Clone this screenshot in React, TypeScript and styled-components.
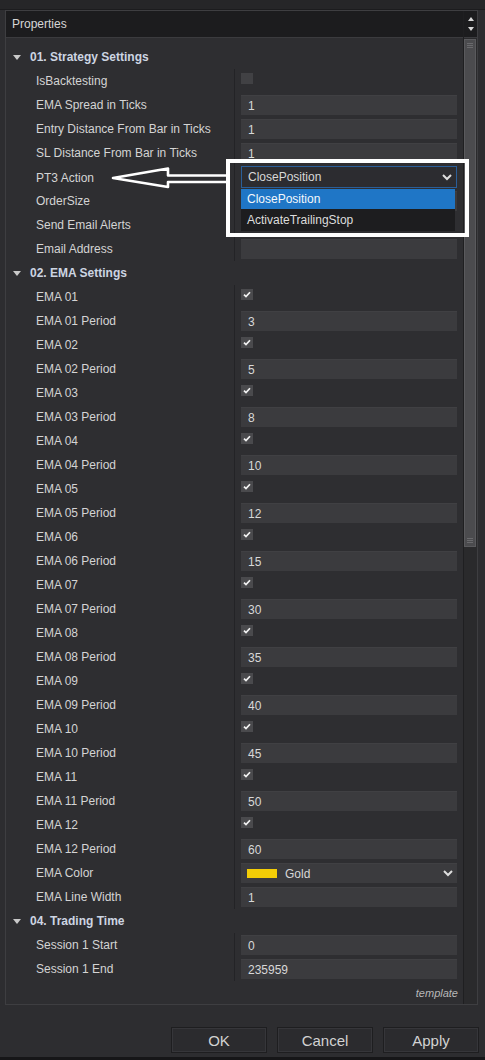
import React from "react";
import styled, { createGlobalStyle } from "styled-components";

const GlobalStyle = createGlobalStyle`
  html, body { margin: 0; padding: 0; background: #2d2d30; }
  body { font-family: "Liberation Sans", Arial, sans-serif; }
  * { box-sizing: border-box; }
`;

const Window = styled.div`
  position: relative;
  width: 485px;
  height: 1060px;
  display: flex;
  flex-direction: column;
  background: #2d2d30;
  overflow: hidden;
`;

const TopBar = styled.div`
  height: 10px;
  background: #262628;
  border-bottom: 1px solid #1c1c1e;
`;

const Panel = styled.div`
  margin-left: 5px;
  width: 473px;
  height: 995px;
  border: 1px solid #3e3e41;
  display: flex;
  background: #2e2e31;
`;

const Content = styled.div`
  flex: 1;
  min-width: 0;
  display: flex;
  flex-direction: column;
`;

const Header = styled.div`
  height: 27px;
  border-bottom: 1px solid #3b3b3e;
  background: #1c1c1e;
  color: #d6d6d6;
  font-size: 12px;
  display: flex;
  align-items: center;
  padding-left: 6px;
`;

const Grid = styled.div`
  padding-top: 7px;
  display: flex;
  flex-direction: column;
`;

const GroupRow = styled.div`
  height: 24px;
  display: flex;
  align-items: center;
  padding-left: 7px;
  gap: 9px;
  font-size: 12px;
  font-weight: bold;
  color: #cdd5e2;
`;

const Caret = styled.span`
  width: 0;
  height: 0;
  border-left: 4px solid transparent;
  border-right: 4px solid transparent;
  border-top: 5px solid #c9c9c9;
`;

const PropRow = styled.div`
  display: grid;
  grid-template-columns: 228px 1fr;
  height: 24px;
`;

const Label = styled.div`
  padding-left: 30px;
  display: flex;
  align-items: center;
  color: #d4d4d4;
  font-size: 12px;
  white-space: nowrap;
`;

const ValueCell = styled.div`
  position: relative;
  border-left: 1px solid #232326;
  padding: 2px 6px;
`;

const Input = styled.div`
  height: 20px;
  background: #3b3b3e;
  border-top: 1px solid #404043;
  display: flex;
  align-items: center;
  padding-left: 7px;
  color: #d8d8d8;
  font-size: 12px;
  gap: 8px;
`;

const SelectBox = styled.div`
  height: 22px;
  margin-top: -1px;
  background: #2c2c30;
  border: 1px solid #2a5e99;
  display: flex;
  align-items: center;
  padding-left: 6px;
  color: #d8d8d8;
  font-size: 12px;
`;

const Chevron = styled.svg`
  margin-left: auto;
  margin-right: 4px;
`;

const DropList = styled.div`
  position: absolute;
  top: 24px;
  left: 6px;
  right: 8px;
  background: #1d1d1f;
  z-index: 2;
`;

const DropItem = styled.div<{ $active?: boolean }>`
  height: ${(p) => (p.$active ? 20 : 22)}px;
  display: flex;
  align-items: center;
  padding-left: 6px;
  font-size: 12px;
  color: ${(p) => (p.$active ? "#f4f8fc" : "#dcdcdc")};
  background: ${(p) => (p.$active ? "#1f76c6" : "#1d1d1f")};
`;

const CheckBox = styled.div<{ $checked?: boolean }>`
  width: 12px;
  height: 11px;
  margin-top: 2px;
  background: ${(p) => (p.$checked ? "#4a4a4d" : "#414144")};
  display: flex;
  align-items: center;
  justify-content: center;
`;

const Swatch = styled.span`
  width: 30px;
  height: 9px;
  background: #f3cd06;
  margin-left: -1px;
`;

const Footer = styled.div`
  height: 23px;
  display: flex;
  justify-content: flex-end;
  align-items: center;
  padding-right: 5px;
  font-style: italic;
  font-size: 11px;
  color: #b8b8b8;
`;

const Scrollbar = styled.div`
  width: 14px;
  display: flex;
  flex-direction: column;
  border-left: 1px solid #1f1f21;
`;

const ScrollButtons = styled.div`
  height: 27px;
  background: #1c1c1e;
  border-bottom: 1px solid #3b3b3e;
  display: flex;
  flex-direction: column;
  align-items: center;
  justify-content: space-around;
  padding: 3px 0;
`;

const Tri = styled.span<{ $up?: boolean }>`
  width: 0;
  height: 0;
  border-left: 3px solid transparent;
  border-right: 3px solid transparent;
  ${(p) =>
    p.$up ? "border-bottom: 4px solid #d8d8d8;" : "border-top: 4px solid #d8d8d8;"}
`;

const Track = styled.div`
  flex: 1;
  background: #2a2a2c;
  padding: 1px 1px 0 0;
`;

const Thumb = styled.div`
  height: 508px;
  background: #4b4b4e;
  border: 1px solid #5a5a5d;
  display: flex;
  flex-direction: column;
  align-items: center;
  justify-content: space-between;
  padding: 3px 0;
`;

const Grip = styled.div`
  width: 6px;
  height: 5px;
  border-top: 1px solid #6a6a6d;
  border-bottom: 1px solid #6a6a6d;
  position: relative;
  &::after {
    content: "";
    position: absolute;
    left: 0;
    right: 0;
    top: 1px;
    border-top: 1px solid #6a6a6d;
  }
`;

const ButtonBar = styled.div`
  display: flex;
  justify-content: flex-end;
  gap: 10px;
  padding: 22px 6px 0 0;
`;

const Button = styled.button`
  width: 96px;
  height: 26px;
  font-family: "Liberation Sans", Arial, sans-serif;
  font-size: 15px;
  color: #d2d2d2;
  background: #2b2b2e;
  border: 1px solid #1e1e20;
  box-shadow: inset 0 0 0 1px #36363a;
  padding: 0;
`;

const BottomStrip = styled.div`
  margin-top: auto;
  height: 3px;
  background: #161618;
`;

const Highlight = styled.div`
  position: absolute;
  left: 226px;
  top: 159px;
  width: 243px;
  height: 78px;
  border: 4px solid #ffffff;
  z-index: 3;
`;

const ArrowSvg = styled.svg`
  position: absolute;
  left: 106px;
  top: 163px;
  z-index: 3;
`;

type Prop =
  | { kind: "group"; title: string }
  | { kind: "input"; label: string; value: string }
  | { kind: "check"; label: string; checked: boolean }
  | { kind: "select"; label: string; value: string; options: string[] }
  | { kind: "color"; label: string; value: string };

const emaRows: Prop[] = [3, 5, 8, 10, 12, 15, 30, 35, 40, 45, 50, 60].flatMap((p, i) => {
  const n = String(i + 1).padStart(2, "0");
  return [
    { kind: "check", label: `EMA ${n}`, checked: true } as Prop,
    { kind: "input", label: `EMA ${n} Period`, value: String(p) } as Prop,
  ];
});

const props: Prop[] = [
  { kind: "group", title: "01. Strategy Settings" },
  { kind: "check", label: "IsBacktesting", checked: false },
  { kind: "input", label: "EMA Spread in Ticks", value: "1" },
  { kind: "input", label: "Entry Distance From Bar in Ticks", value: "1" },
  { kind: "input", label: "SL Distance From Bar in Ticks", value: "1" },
  { kind: "select", label: "PT3 Action", value: "ClosePosition", options: ["ClosePosition", "ActivateTrailingStop"] },
  { kind: "input", label: "OrderSize", value: "" },
  { kind: "check", label: "Send Email Alerts", checked: false },
  { kind: "input", label: "Email Address", value: "" },
  { kind: "group", title: "02. EMA Settings" },
  ...emaRows,
  { kind: "color", label: "EMA Color", value: "Gold" },
  { kind: "input", label: "EMA Line Width", value: "1" },
  { kind: "group", title: "04. Trading Time" },
  { kind: "input", label: "Session 1 Start", value: "0" },
  { kind: "input", label: "Session 1 End", value: "235959" },
];

const ChevronIcon = () => (
  <Chevron width="10" height="7" viewBox="0 0 10 7">
    <polyline points="1,1 5,5 9,1" fill="none" stroke="#dedede" strokeWidth="2" />
  </Chevron>
);

const CheckMark = () => (
  <svg width="8" height="7" viewBox="0 0 8 7">
    <polyline points="1,3.6 3,5.6 7,1.2" fill="none" stroke="#f2f2f2" strokeWidth="1.7" />
  </svg>
);

function renderValue(p: Prop) {
  switch (p.kind) {
    case "input":
      return <Input>{p.value}</Input>;
    case "check":
      return <CheckBox $checked={p.checked}>{p.checked && <CheckMark />}</CheckBox>;
    case "select":
      return (
        <>
          <SelectBox>
            {p.value}
            <ChevronIcon />
          </SelectBox>
          <DropList>
            {p.options.map((o, i) => (
              <DropItem key={o} $active={i === 0}>
                {o}
              </DropItem>
            ))}
          </DropList>
        </>
      );
    case "color":
      return (
        <Input>
          <Swatch />
          {p.value}
          <ChevronIcon />
        </Input>
      );
    default:
      return null;
  }
}

export default function App() {
  return (
    <>
      <GlobalStyle />
      <Window>
        <TopBar />
        <Panel>
          <Content>
            <Header>Properties</Header>
            <Grid>
              {props.map((p, i) =>
                p.kind === "group" ? (
                  <GroupRow key={i}>
                    <Caret />
                    {p.title}
                  </GroupRow>
                ) : (
                  <PropRow key={i}>
                    <Label>{p.label}</Label>
                    <ValueCell>{renderValue(p)}</ValueCell>
                  </PropRow>
                )
              )}
            </Grid>
            <Footer>template</Footer>
          </Content>
          <Scrollbar>
            <ScrollButtons>
              <Tri $up />
              <Tri />
            </ScrollButtons>
            <Track>
              <Thumb>
                <Grip />
                <Grip />
              </Thumb>
            </Track>
          </Scrollbar>
        </Panel>
        <ButtonBar>
          <Button>OK</Button>
          <Button>Cancel</Button>
          <Button>Apply</Button>
        </ButtonBar>
        <BottomStrip />
        <Highlight />
        <ArrowSvg width="124" height="28" viewBox="106 163 124 28">
          <polygon
            points="113,178 168,168.5 168,175.5 228,175.5 228,182 168,182 168,187"
            fill="none"
            stroke="#ffffff"
            strokeWidth="2.6"
            strokeLinejoin="round"
          />
        </ArrowSvg>
      </Window>
    </>
  );
}
